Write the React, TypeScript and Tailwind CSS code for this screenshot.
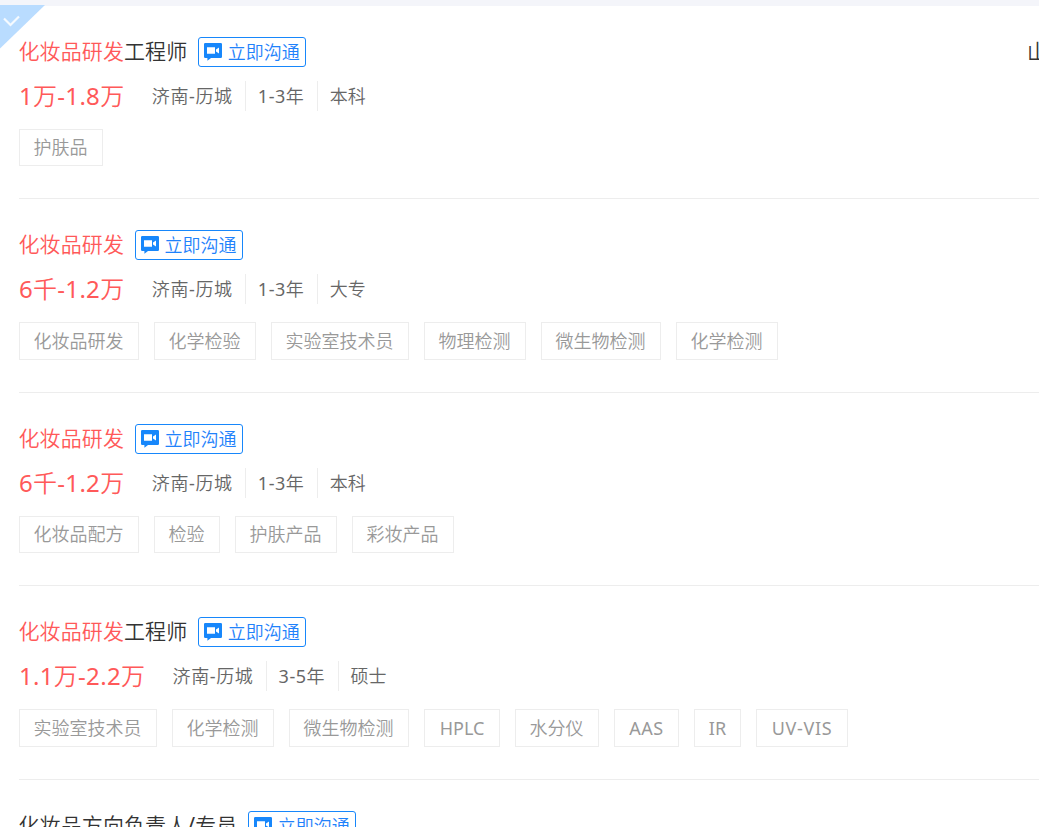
import React from 'react';
import clsx from 'clsx';

interface Tag {
  label: string;
  width?: string;
}

interface Job {
  id: number;
  keyword?: string;
  title?: string;
  salary: string;
  city: string;
  experience: string;
  degree: string;
  tags: Tag[];
  company?: string;
  applied?: boolean;
}

const JOBS: Job[] = [
  {
    id: 1,
    keyword: '化妆品研发',
    title: '工程师',
    salary: '1万-1.8万',
    city: '济南-历城',
    experience: '1-3年',
    degree: '本科',
    tags: [{ label: '护肤品' }],
    company: '山',
    applied: true,
  },
  {
    id: 2,
    keyword: '化妆品研发',
    salary: '6千-1.2万',
    city: '济南-历城',
    experience: '1-3年',
    degree: '大专',
    tags: [
      { label: '化妆品研发' },
      { label: '化学检验' },
      { label: '实验室技术员' },
      { label: '物理检测' },
      { label: '微生物检测' },
      { label: '化学检测' },
    ],
  },
  {
    id: 3,
    keyword: '化妆品研发',
    salary: '6千-1.2万',
    city: '济南-历城',
    experience: '1-3年',
    degree: '本科',
    tags: [{ label: '化妆品配方' }, { label: '检验' }, { label: '护肤产品' }, { label: '彩妆产品' }],
  },
  {
    id: 4,
    keyword: '化妆品研发',
    title: '工程师',
    salary: '1.1万-2.2万',
    city: '济南-历城',
    experience: '3-5年',
    degree: '硕士',
    tags: [
      { label: '实验室技术员' },
      { label: '化学检测' },
      { label: '微生物检测' },
      { label: 'HPLC', width: 'w-[76px]' },
      { label: '水分仪' },
      { label: 'AAS', width: 'w-[65px] tracking-[0.6px]' },
      { label: 'IR', width: 'w-[47px]' },
      { label: 'UV-VIS', width: 'w-[92px] tracking-[0.7px]' },
    ],
  },
  {
    id: 5,
    title: '化妆品方向负责人/专员',
    salary: '',
    city: '',
    experience: '',
    degree: '',
    tags: [],
  },
];

const ChatIcon: React.FC = () => (
  <svg width="18" height="18" viewBox="0 0 18 18" className="shrink-0">
    <path d="M1.2 0h15.6Q18 0 18 1.2v12.6Q18 15 16.8 15H7l-3.6 2.8V15H1.2Q0 15 0 13.8V1.2Q0 0 1.2 0z" fill="#1787fb" />
    <path d="M3 4.2h8v6.6H3zM12 6.6l3-2v5.8l-3-2z" fill="#fff" />
  </svg>
);

const ChatButton: React.FC = () => (
  <button className="flex h-[30px] w-[108px] shrink-0 items-center gap-[5.4px] rounded-[3px] border border-[#1787fb] pl-[5px] text-[18px] leading-[28px] text-[#1f82fb]">
    <ChatIcon />
    <span className="pt-[0.4px]">立即沟通</span>
  </button>
);

/* Corner ribbon with a check mark */
const AppliedCorner: React.FC = () => (
  <svg width="45" height="44" viewBox="0 0 45 44" className="absolute left-0 -top-[0.5px]">
    <path d="M0 0h45L0 43.5z" fill="#b9dcff" />
    <path d="M4 13.5l6.5 6.5L19 11.5" fill="none" stroke="#fff" strokeOpacity="0.85" strokeWidth="2.2" />
  </svg>
);

const JobCard: React.FC<{ job: Job }> = ({ job }) => (
  <li className="relative h-[193.5px] shrink-0">
    {job.applied && <AppliedCorner />}
    <div className="relative ml-[19px] h-full border-b border-[#ededed] pt-[31.25px]">
      <div className="flex h-[30px] items-center whitespace-nowrap text-[21px] leading-[30px] text-[#333]">
        <h3 className="-ml-[0.5px] mr-[11px] pb-[2px] tracking-[0.1px]">
          <span className="text-[#ff5959]">{job.keyword}</span>
          {job.title}
        </h3>
        <ChatButton />
        {job.company && <span className="ml-auto w-[12px] pb-[2px]">{job.company}</span>}
      </div>

      {job.salary && (
        <div className="mt-[14px] flex h-[30px] whitespace-nowrap text-[18px] leading-[30px] text-[#666]">
          <span className="mr-[27.4px] text-[24px] tracking-[0.3px] text-[#ff5959]">{job.salary}</span>
          <span className="w-[94px] border-r border-[#ededed] tracking-[0.6px]">{job.city}</span>
          <span className="w-[72px] border-r border-[#ededed] pl-3 tracking-[0.5px]">{job.experience}</span>
          <span className="pl-3">{job.degree}</span>
        </div>
      )}

      <div className="mt-[17.75px] flex gap-[15px]">
        {job.tags.map((tag) => (
          <span
            key={tag.label}
            className={clsx(
              'h-[37.5px] shrink-0 whitespace-nowrap border border-[#ededed] pt-[0.5px] text-center text-[18px] leading-[35.9px] text-[#999]',
              tag.width ?? 'pl-[13.5px] pr-[14.5px]'
            )}
          >
            {tag.label}
          </span>
        ))}
      </div>
    </div>
  </li>
);

const App: React.FC = () => (
  <div className="flex h-screen w-full flex-col overflow-hidden bg-white font-['Noto_Sans','Noto_Sans_CJK_SC_DemiLight','Noto_Sans_CJK_SC',sans-serif] font-normal">
    <div className="h-[5.5px] shrink-0 bg-[#f4f5fa]" />
    <ul className="flex flex-col">
      {JOBS.map((job) => (
        <JobCard key={job.id} job={job} />
      ))}
    </ul>
  </div>
);

export default App;
